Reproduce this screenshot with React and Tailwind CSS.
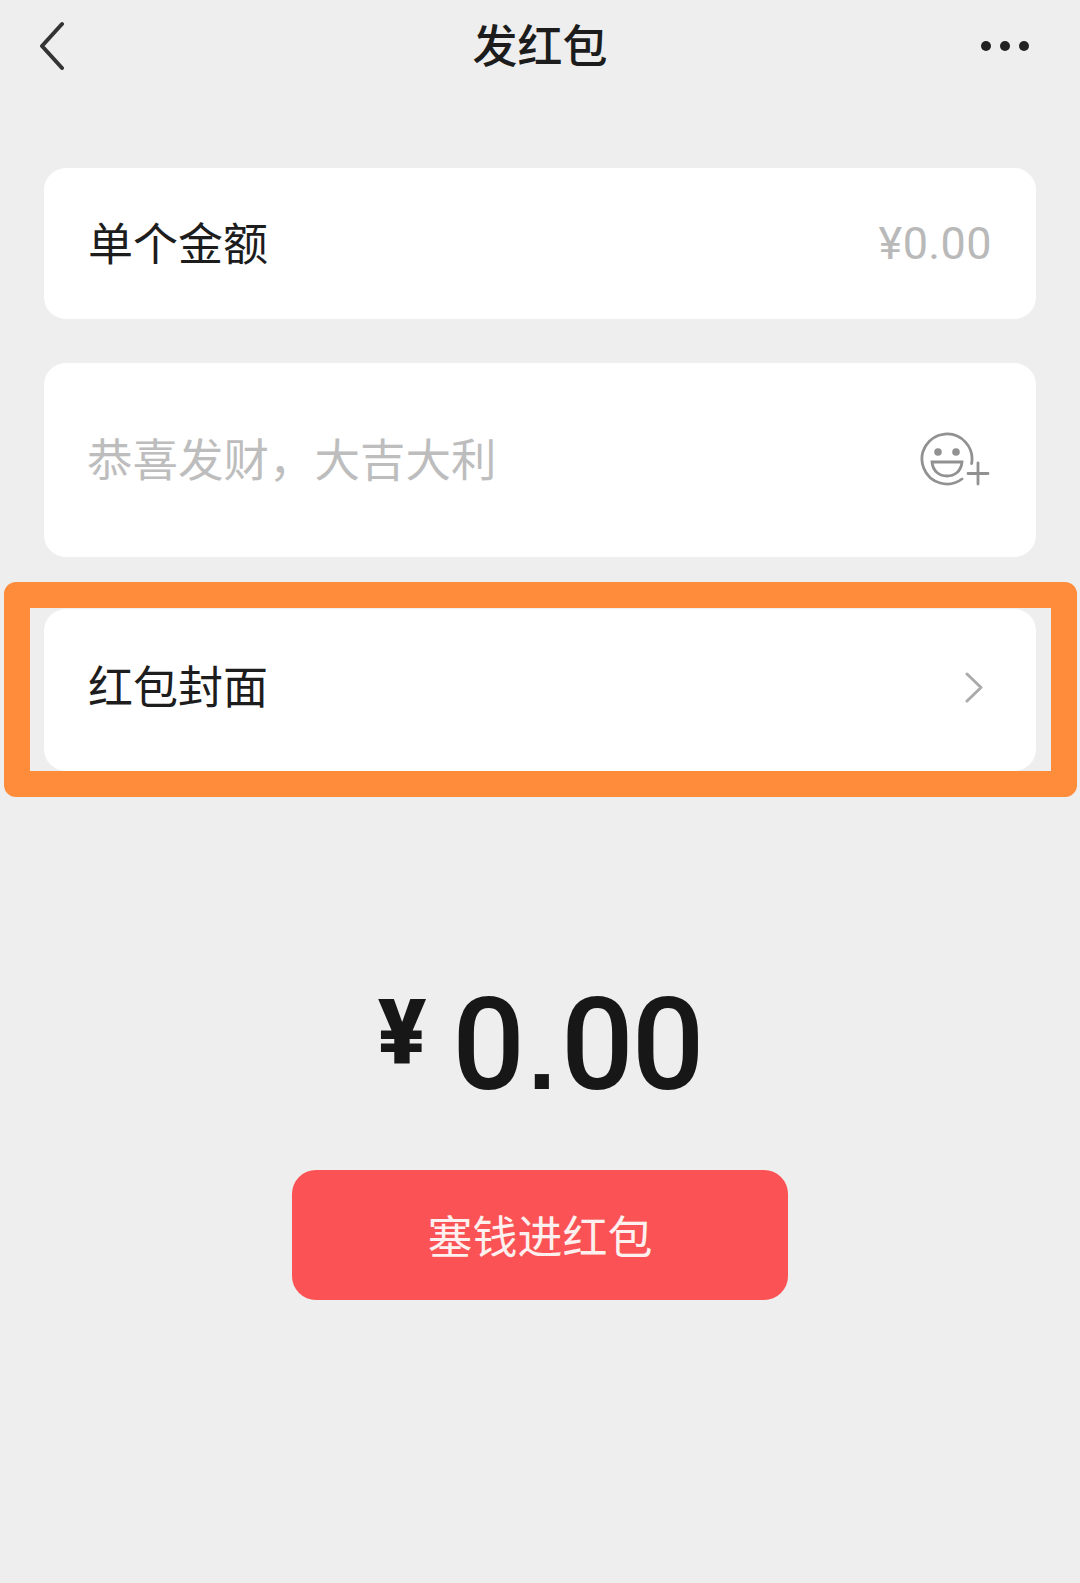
const CJK = { fontFamily: '"Noto Sans CJK SC", "Noto Sans", sans-serif' };

function Back() {
  return (
    <svg width="30" height="50" viewBox="0 0 30 50" fill="none" stroke="#333333" strokeWidth="4" strokeLinecap="round" strokeLinejoin="round">
      <path d="M22 3 L2 25 L22 47" />
    </svg>
  );
}

function Smile() {
  return (
    <svg width="72" height="56" viewBox="0 0 72 56" fill="none" stroke="#919191" strokeWidth="2.800" strokeLinecap="round">
      <path d="M51.600 31.500 A25 25 0 1 0 42 47" />
      <circle cx="18" cy="20" r="3.800" fill="#919191" stroke="none" />
      <circle cx="36" cy="20" r="3.800" fill="#919191" stroke="none" />
      <path d="M12 30 H42 C41 40 34 44 27 44 C20 44 13 40 12 30 Z" />
      <path d="M48 41.500 H68 M58 31 V52" />
    </svg>
  );
}

function Chevron() {
  return (
    <svg width="20" height="32" viewBox="0 0 20 32" fill="none" stroke="#ababab" strokeWidth="3" strokeLinecap="round" strokeLinejoin="round">
      <path d="M3 2 L17 15.500 L3 29" />
    </svg>
  );
}

export default function App() {
  return (
    <div className="relative w-[1080px] h-[1583px] bg-[#eeeeee] overflow-hidden flex flex-col items-center" style={CJK}>
      <header className="w-full h-[92px] px-10 flex items-center justify-between relative shrink-0">
        <Back />
        <h1 className="absolute inset-x-0 top-[-2px] text-center text-[45px] leading-[92px] font-medium text-[#1c1c1c]">发红包</h1>
        <div className="flex gap-[9px] mr-[11px]">
          <span className="w-[10px] h-[10px] rounded-full bg-[#222222]" />
          <span className="w-[10px] h-[10px] rounded-full bg-[#222222]" />
          <span className="w-[10px] h-[10px] rounded-full bg-[#222222]" />
        </div>
      </header>

      <section className="mt-[76px] w-[992px] h-[151px] rounded-[22px] bg-white pl-[44px] pr-[44px] flex items-center justify-between">
        <span className="text-[45px] pb-[4px] text-[#1d1d1d]">单个金额</span>
        <span className="text-[45px] text-[#b9b9b9] tracking-[0.400px]" style={{ fontFamily: 'Roboto, sans-serif' }}>¥0.00</span>
      </section>

      <section className="mt-[44px] w-[992px] h-[194px] rounded-[22px] bg-white pl-[43px] pr-[44px] flex items-center justify-between">
        <span className="text-[45.500px] pb-[6px] text-[#bdbdbd]">恭喜发财，大吉大利</span>
        <Smile />
      </section>

      <section className="mt-[52px] w-[992px] h-[162px] rounded-[22px] bg-white pl-[44px] pr-[52px] flex items-center justify-between">
        <span className="text-[45px] pb-[10px] text-[#1d1d1d]">红包封面</span>
        <div className="pb-[5px]"><Chevron /></div>
      </section>

      <div className="absolute left-[4px] top-[582px] w-[1073px] h-[215px] rounded-[12px] border-[26px] border-[#ff8c3b]" />

      <div className="mt-[218px] flex items-start text-[#171717]" style={{ fontFamily: 'Roboto, sans-serif' }}>
        <span className="text-[90px] leading-[86px] font-black mr-[26px] mt-[2px]">¥</span>
        <span className="text-[128px] leading-[112px] font-medium flex items-baseline tracking-[-2px]">
          <span>0</span>
          <span className="text-[100px] ml-[5px] mr-[5px] font-bold tracking-normal" style={{ fontFamily: '"Liberation Sans", sans-serif' }}>.</span>
          <span>00</span>
        </span>
      </div>

      <button className="mt-[60px] w-[496px] h-[130px] rounded-[24px] bg-[#fb5355] text-[#fdf0ee] text-[45px] flex items-center justify-center">
        塞钱进红包
      </button>
    </div>
  );
}
